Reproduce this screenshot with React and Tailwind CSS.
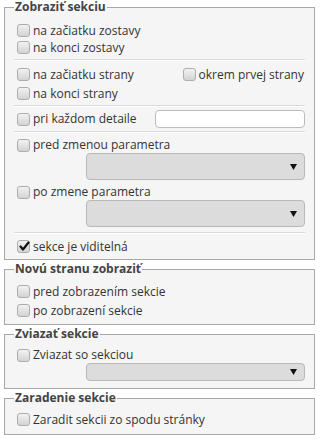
import React from "react";

function Cb({ checked = false }) {
  return (
    <span className="relative inline-block w-[13px] h-[13px] shrink-0 rounded-[3px] border border-[#adadad] bg-gradient-to-b from-[#f2f2f2] to-[#d3d3d3]">
      {checked && (
        <svg viewBox="0 0 13 13" className="absolute left-[0px] top-[-1px] w-[13px] h-[13px]">
          <path d="M2.5 6.5 L5 9.5 L10.5 2.5" fill="none" stroke="#111" strokeWidth="2.2" strokeLinecap="round" strokeLinejoin="round" />
        </svg>
      )}
    </span>
  );
}

function Row({ label, checked, className = "" }) {
  return (
    <div className={"flex items-center gap-[3px] pl-[3px] " + className}>
      <Cb checked={checked} />
      <span className="leading-none whitespace-nowrap">{label}</span>
    </div>
  );
}

function Sep({ className = "" }) {
  return <div className={"h-0 border-t border-b border-t-[#d9d9d9] border-b-white " + className} />;
}

function Select({ className = "" }) {
  return (
    <div className={"ml-[72px] w-[219px] flex items-center justify-end rounded-[4px] border border-[#b9b9b9] bg-[#dcdcdc] pr-[7px] " + className}>
      <svg viewBox="0 0 7 6" className="w-[7px] h-[6px]">
        <path d="M0 0 H7 L3.5 6 Z" fill="#111" />
      </svg>
    </div>
  );
}

function Legend({ children }) {
  return (
    <legend className="ml-[0px] px-[1px] font-bold text-[#444] leading-[14px]">{children}</legend>
  );
}

const fs = "ml-[4px] w-[311px] border border-[#a8a8a8] bg-[#f5f5f5] px-[9px] min-w-0";

export default function App() {
  return (
    <div className="w-[317px] h-[439px] bg-white text-[12px] text-[#333] font-['Open_Sans',sans-serif] overflow-hidden">
      <fieldset className={fs + " pt-[8px] pb-[4px]"}>
        <Legend>Zobraziť sekciu</Legend>
        <Row label="na začiatku zostavy" className="h-[17px]" />
        <Row label="na konci zostavy" className="h-[17px]" />
        <Sep className="mt-[3px]" />
        <div className="mt-[4px] h-[19px] flex items-center justify-between">
          <Row label="na začiatku strany" />
          <Row label="okrem prvej strany" className="pr-[1px]" />
        </div>
        <Row label="na konci strany" className="h-[19px]" />
        <Sep className="mt-[2px]" />
        <div className="mt-[3px] h-[18px] flex items-center justify-between">
          <Row label="pri každom detaile" />
          <div className="w-[150px] h-[18px] rounded-[4px] border border-[#bcbcbc] bg-white" />
        </div>
        <Sep className="mt-[3px]" />
        <Row label="pred zmenou parametra" className="mt-[4px] h-[16px]" />
        <Select className="h-[27px]" />
        <Row label="po zmene parametra" className="mt-[4px] h-[16px]" />
        <Select className="h-[27px]" />
        <Sep className="mt-[5px]" />
        <Row label="sekce je viditelná" checked className="mt-[4px] h-[17px]" />
      </fieldset>

      <fieldset className={fs + " mt-[2px] pt-[6px] pb-[4px]"}>
        <Legend>Novú stranu zobraziť</Legend>
        <Row label="pred zobrazením sekcie" className="h-[19px]" />
        <Row label="po zobrazení sekcie" className="h-[19px]" />
      </fieldset>

      <fieldset className={fs + " mt-[2px] pt-[6px] pb-[7px]"}>
        <Legend>Zviazať sekcie</Legend>
        <Row label="Zviazat so sekciou" className="h-[16px]" />
        <Select className="h-[18px]" />
      </fieldset>

      <fieldset className={fs + " mt-[2px] pt-[6px] pb-[6px]"}>
        <Legend>Zaradenie sekcie</Legend>
        <Row label="Zaradit sekcii zo spodu stránky" className="h-[17px]" />
      </fieldset>
    </div>
  );
}
